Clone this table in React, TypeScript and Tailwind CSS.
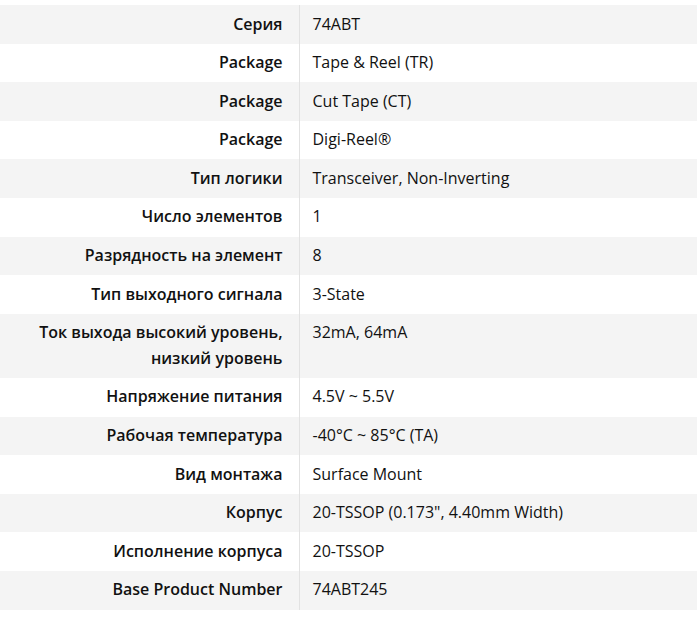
const rows: [string, string][] = [
  ["Серия", "74ABT"],
  ["Package", "Tape & Reel (TR)"],
  ["Package", "Cut Tape (CT)"],
  ["Package", "Digi-Reel®"],
  ["Тип логики", "Transceiver, Non-Inverting"],
  ["Число элементов", "1"],
  ["Разрядность на элемент", "8"],
  ["Тип выходного сигнала", "3-State"],
  ["Ток выхода высокий уровень, низкий уровень", "32mA, 64mA"],
  ["Напряжение питания", "4.5V ~ 5.5V"],
  ["Рабочая температура", "-40°C ~ 85°C (TA)"],
  ["Вид монтажа", "Surface Mount"],
  ["Корпус", "20-TSSOP (0.173\", 4.40mm Width)"],
  ["Исполнение корпуса", "20-TSSOP"],
  ["Base Product Number", "74ABT245"],
];

export default function App() {
  return (
    <div className="bg-white pt-[5px] text-[16px] leading-[25.6px] text-[#111]" style={{ fontFamily: "'Open Sans', sans-serif" }}>
      <table className="w-full border-collapse">
        <tbody>
          {rows.map(([label, value], i) => (
            <tr key={i} className={i % 2 === 0 ? "bg-[#f4f4f4]" : "bg-white"}>
              <th className="w-[299px] border-r border-[#e2e2e2] py-[6.5px] pl-4 pr-4 text-right align-top font-semibold">
                {label}
              </th>
              <td className="py-[6.5px] pl-[13px] pr-4 text-left align-top font-normal">{value}</td>
            </tr>
          ))}
        </tbody>
      </table>
    </div>
  );
}
